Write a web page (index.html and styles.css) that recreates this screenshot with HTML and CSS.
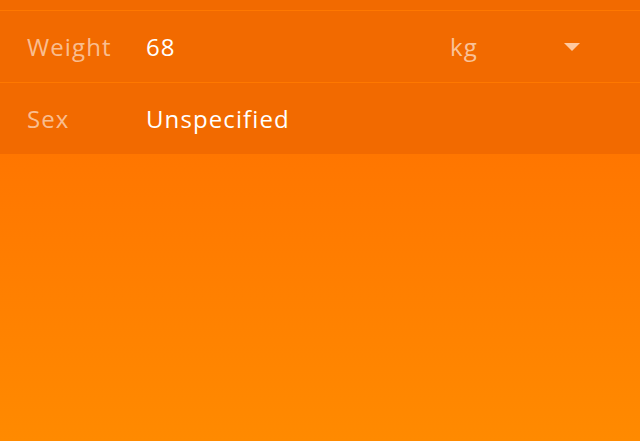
FILE: index.html
```html
<!DOCTYPE html>
<html>
<head>
<meta charset="utf-8">
<link rel="stylesheet" href="styles.css">
</head>
<body>
<div class="form">
  <div class="row row-partial"></div>
  <div class="row">
    <span class="label">Weight</span>
    <span class="value">68</span>
    <span class="unit">kg</span>
    <span class="caret"></span>
  </div>
  <div class="row row-last">
    <span class="label">Sex</span>
    <span class="value">Unspecified</span>
  </div>
</div>
</body>
</html>
```
FILE: styles.css
```css
html, body {
  margin: 0;
  height: 100%;
}
body {
  background: linear-gradient(180deg, #ff7400 0%, #ff7600 35%, #ff8a00 100%);
  font-family: "Open Sans", "Lato", sans-serif;
  font-size: 24px;
  letter-spacing: 1.1px;
  overflow: hidden;
}
.form {
  display: flex;
  flex-direction: column;
}
.row {
  display: flex;
  align-items: center;
  height: 71px;
  padding-left: 27px;
  background: #f26a00;
  border-bottom: 1px solid #ff7800;
}
.row-partial {
  height: 10px;
}
.row-last {
  border-bottom: none;
}
.label {
  width: 119px;
  color: rgba(255, 255, 255, 0.58);
}
.value {
  width: 304px;
  color: #fff;
}
.unit {
  width: 114px;
  color: rgba(255, 255, 255, 0.62);
}
.caret {
  width: 0;
  height: 0;
  border-left: 8px solid transparent;
  border-right: 8px solid transparent;
  border-top: 8px solid #ffc9a0;
}
```
